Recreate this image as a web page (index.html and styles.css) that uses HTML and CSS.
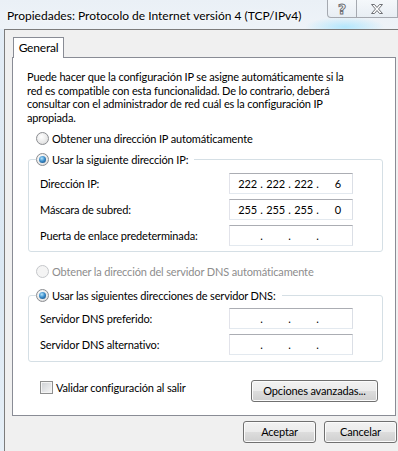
FILE: index.html
```html
<!DOCTYPE html>
<html lang="es">
<head>
    <meta charset="UTF-8">
    <meta name="viewport" content="width=device-width, initial-scale=1.0">
    <title>Propiedades: Protocolo de Internet versión 4 (TCP/IPv4)</title>
    <link rel="stylesheet" href="styles.css">
</head>
<body>
    <div class="window">
        <div class="titlebar">
            <div class="title">Propiedades: Protocolo de Internet versión 4 (TCP/IPv4)</div>
            <div class="caption-buttons">
                <div class="cap-btn help-btn">?</div>
                <div class="cap-btn close-btn">
                    <svg width="14" height="12" viewBox="0 0 14 12">
                        <path d="M1.5 1.5h3l2.5 3 2.5-3h3l-4 4.5 4 4.5h-3l-2.5-3-2.5 3h-3l4-4.5z" fill="#fff" stroke="#6f7176" stroke-width="1"/>
                    </svg>
                </div>
            </div>
        </div>
        <div class="client">
            <div class="tabs">
                <div class="tab">General</div>
            </div>
            <div class="panel">
                <p class="intro">Puede hacer que la configuración IP se asigne automáticamente si la<br>red es compatible con esta funcionalidad. De lo contrario, deberá<br>consultar con el administrador de red cuál es la configuración IP<br>apropiada.</p>

                <div class="option first-option"><span class="radio"></span>Obtener una dirección IP automáticamente</div>

                <fieldset class="group">
                    <legend class="option"><span class="radio checked"></span>Usar la siguiente dirección IP:</legend>
                    <div class="field-row">
                        <span>Dirección IP:</span>
                        <div class="ip-box"><span class="octet">222</span><span class="dot">.</span><span class="octet">222</span><span class="dot">.</span><span class="octet">222</span><span class="dot">.</span><span class="octet">6</span></div>
                    </div>
                    <div class="field-row">
                        <span>Máscara de subred:</span>
                        <div class="ip-box"><span class="octet">255</span><span class="dot">.</span><span class="octet">255</span><span class="dot">.</span><span class="octet">255</span><span class="dot">.</span><span class="octet">0</span></div>
                    </div>
                    <div class="field-row">
                        <span>Puerta de enlace predeterminada:</span>
                        <div class="ip-box"><span class="octet"></span><span class="dot">.</span><span class="octet"></span><span class="dot">.</span><span class="octet"></span><span class="dot">.</span><span class="octet"></span></div>
                    </div>
                </fieldset>

                <div class="option disabled dns-auto"><span class="radio"></span>Obtener la dirección del servidor DNS automáticamente</div>

                <fieldset class="group dns-group">
                    <legend class="option"><span class="radio checked"></span>Usar las siguientes direcciones de servidor DNS:</legend>
                    <div class="field-row">
                        <span>Servidor DNS preferido:</span>
                        <div class="ip-box"><span class="octet"></span><span class="dot">.</span><span class="octet"></span><span class="dot">.</span><span class="octet"></span><span class="dot">.</span><span class="octet"></span></div>
                    </div>
                    <div class="field-row">
                        <span>Servidor DNS alternativo:</span>
                        <div class="ip-box"><span class="octet"></span><span class="dot">.</span><span class="octet"></span><span class="dot">.</span><span class="octet"></span><span class="dot">.</span><span class="octet"></span></div>
                    </div>
                </fieldset>

                <div class="panel-footer">
                    <div class="check-option"><span class="checkbox"></span>Validar configuración al salir</div>
                    <button class="btn advanced-btn">Opciones avanzadas...</button>
                </div>
            </div>
            <div class="dialog-buttons">
                <button class="btn">Aceptar</button>
                <button class="btn">Cancelar</button>
            </div>
        </div>
    </div>
</body>
</html>
```

FILE: styles.css
```css
html, body {
    margin: 0;
    padding: 0;
}
body {
    width: 398px;
    height: 451px;
    overflow: hidden;
    font-family: Lato, "Noto Sans", sans-serif;
    font-size: 11px;
    letter-spacing: -0.15px;
    color: #000;
    background: linear-gradient(180deg, #e4edf6, #dbe8f3 60%, #e6eff7);
}
.window {
    display: flex;
    flex-direction: column;
    height: 451px;
}
.titlebar {
    height: 29px;
    display: flex;
    align-items: flex-start;
    background:
        radial-gradient(ellipse 40px 10px at 345px 27px, rgba(165, 228, 255, 0.8), rgba(165, 228, 255, 0)),
        linear-gradient(180deg, #eaf0f6, #eef3f8);
}
.title {
    padding: 9px 0 0 7px;
    font-size: 12px;
    letter-spacing: 0;
    line-height: 14px;
    white-space: nowrap;
    text-shadow: 0 0 6px #fff, 0 0 3px #fff;
}
.caption-buttons {
    margin-left: auto;
    display: flex;
}
.cap-btn {
    height: 17px;
    display: flex;
    align-items: center;
    justify-content: center;
    border: 1px solid #a5a9b0;
    border-top: none;
    background: linear-gradient(180deg, rgba(255, 255, 255, 0.5), rgba(230, 236, 242, 0.7));
}
.help-btn {
    width: 28px;
    border-bottom-left-radius: 4px;
    font-family: "DejaVu Sans", sans-serif;
    font-size: 14px;
    font-weight: bold;
    color: #fff;
    -webkit-text-stroke: 1px #6f7176;
}
.close-btn {
    width: 40px;
    border-left: none;
}
.client {
    flex: 1;
    margin-left: 4px;
    border-left: 1px solid #7c7c7c;
    border-top: 1px solid #7c7c7c;
    background: #f0f0f0;
}
.tabs {
    display: flex;
    padding: 7px 0 0 8px;
}
.tab {
    width: 49px;
    height: 20px;
    line-height: 20px;
    text-align: center;
    font-size: 12px;
    letter-spacing: -0.2px;
    background: #fff;
    border: 1px solid #898c95;
    border-bottom: none;
    margin-bottom: -1px;
    position: relative;
    z-index: 1;
}
.panel {
    width: 384px;
    box-sizing: border-box;
    margin-left: 7px;
    padding: 12px 11px 13px 14px;
    background: #fff;
    border: 1px solid #898c95;
}
.intro {
    margin: 0;
    line-height: 13.7px;
    white-space: nowrap;
}
.option {
    display: flex;
    align-items: center;
    height: 14px;
    white-space: nowrap;
}
.first-option {
    margin: 7px 0 0 9px;
}
.radio {
    width: 13px;
    height: 13px;
    box-sizing: border-box;
    border-radius: 50%;
    border: 1px solid #8b8d91;
    background: radial-gradient(circle at 40% 35%, #fff 0%, #e8e8e8 60%, #d0d0d0 100%);
    margin-right: 3px;
    display: flex;
    align-items: center;
    justify-content: center;
    flex: none;
}
.radio.checked::after {
    content: "";
    width: 7px;
    height: 7px;
    border-radius: 50%;
    background: radial-gradient(circle at 40% 35%, #b4e4fb 0%, #3d8fcc 45%, #0e3f72 100%);
}
.disabled {
    color: #8d8d8d;
}
.disabled .radio {
    border-color: #c5c7ca;
    background: #f4f4f4;
}
.dns-auto {
    margin: 13px 0 0 9px;
}
.group {
    margin: 7px 1px 0 1px;
    padding: 5px 29px 5px 11px;
    border: 1px solid #d5dfe5;
    border-radius: 3px;
}
.group legend {
    margin-left: -4px;
    padding: 0 6px 0 0;
}
.dns-group {
    margin-top: 10px;
    padding-bottom: 6px;
}
.field-row {
    display: flex;
    align-items: center;
    justify-content: space-between;
    height: 21px;
    margin-top: 5px;
}
.group .field-row:first-of-type {
    margin-top: 1px;
}
.dns-group .field-row:first-of-type {
    margin-top: 0;
}
.ip-box {
    width: 124px;
    height: 21px;
    box-sizing: border-box;
    display: flex;
    align-items: center;
    padding-left: 8px;
    border: 1px solid;
    border-color: #abadb3 #dbdfe6 #e3e9ef #e2e3ea;
    background: #fff;
}
.octet {
    width: 19px;
    text-align: right;
}
.dot {
    width: 9px;
    text-align: center;
}
.panel-footer {
    display: flex;
    justify-content: space-between;
    align-items: flex-start;
    margin-top: 18px;
}
.check-option {
    display: flex;
    align-items: center;
    height: 14px;
    margin: 1px 0 0 13px;
}
.checkbox {
    width: 13px;
    height: 13px;
    box-sizing: border-box;
    border: 1px solid #8e8f8f;
    background: linear-gradient(135deg, #cdd0d4, #f7f7f7);
    box-shadow: inset 0 0 0 1px #f4f4f4;
    margin-right: 3px;
}
.btn {
    height: 22px;
    padding: 0;
    font-family: inherit;
    font-size: 11px;
    letter-spacing: -0.15px;
    color: #000;
    border: 1px solid #707070;
    border-radius: 3px;
    background: linear-gradient(180deg, #f2f2f2 0%, #ebebeb 50%, #dddddd 51%, #cfcfcf 100%);
    box-shadow: inset 0 0 0 1px #fbfbfb;
}
.advanced-btn {
    width: 127px;
    margin-right: 6px;
}
.dialog-buttons {
    display: flex;
    justify-content: flex-end;
    gap: 8px;
    margin: 5px 1px 0 0;
}
.dialog-buttons .btn {
    width: 73px;
}
```
